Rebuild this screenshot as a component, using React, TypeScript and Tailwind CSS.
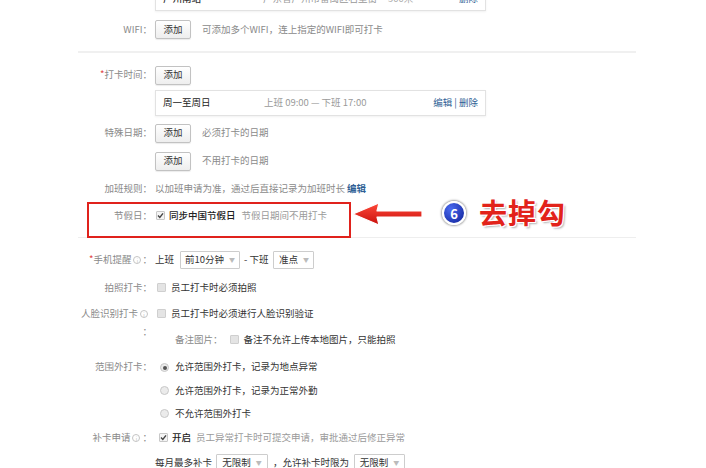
import React from "react";

const Btn = () => (
  <span className="inline-flex h-[19px] w-[36px] items-center justify-center rounded-[2px] border border-[#c2c2c2] bg-linear-to-b from-white to-[#eeeeee] text-[#333] shadow-[0_1px_1px_rgba(0,0,0,0.08)]">
    添加
  </span>
);

const Check = ({ checked = false }: { checked?: boolean }) =>
  checked ? (
    <span className="inline-flex h-[9px] w-[9px] items-center justify-center rounded-[1px] border border-[#c8c8c8] bg-[#f4f4f4]">
      <svg width="7" height="7" viewBox="0 0 7 7">
        <path d="M1 3.6 L2.8 5.4 L6 1.4" stroke="#444" strokeWidth="1.4" fill="none" />
      </svg>
    </span>
  ) : (
    <span className="inline-block h-[9px] w-[9px] rounded-[1px] border border-[#cfcfcf] bg-[#e4e4e4]" />
  );

const Radio = ({ on = false }: { on?: boolean }) => (
  <span className="inline-flex h-[9px] w-[9px] items-center justify-center rounded-full border border-[#c8c8c8] bg-[#ebebeb]">
    {on && <span className="h-[4px] w-[4px] rounded-full bg-[#555]" />}
  </span>
);

const Info = () => (
  <span className="ml-[2px] inline-flex h-[8px] w-[8px] items-center justify-center rounded-full border border-[#c4c4c4] text-[5px] leading-none text-[#bbb]">
    i
  </span>
);

const Sel = ({ text, w }: { text: string; w: string }) => (
  <span className={`inline-flex h-[18px] items-center justify-center gap-[5px] rounded-[1px] border border-[#cdcdcd] bg-white text-[#333] ${w}`}>
    <span>{text}</span>
    <span className="text-[6px] text-[#bbb]">▼</span>
  </span>
);

const Row = ({
  label,
  children,
  className = "",
}: {
  label?: React.ReactNode;
  children?: React.ReactNode;
  className?: string;
}) => (
  <div className={`flex h-[18px] items-center ${className}`}>
    <div className="flex w-[152px] shrink-0 items-center justify-end whitespace-nowrap text-[#8a8a8a]">
      {label}
    </div>
    <div className="ml-[3px] flex items-center whitespace-nowrap">{children}</div>
  </div>
);

export default function App() {
  return (
    <div className="relative h-[468px] w-[706px] overflow-hidden bg-white font-['Noto_Sans_CJK_SC','Noto_Sans',sans-serif] text-[9.5px] leading-none text-[#444]">
      <div className="-mt-[14px] flex flex-col">
        {/* top location box */}
        <div className="ml-[155px] flex h-[25px] w-[331px] items-center border border-[#e2e2e2] px-[7px] shadow-[0_1px_2px_rgba(0,0,0,0.06)]">
          <span className="w-[100px] font-medium text-[#333]">广州南站</span>
          <span className="w-[125px] text-[#999]">广东省广州市番禺区石壁街</span>
          <span className="text-[#aaa]">500米</span>
          <span className="ml-auto text-[#2f5f95]">删除</span>
        </div>

        <Row label="WIFI：" className="mt-[9px] h-[19px]">
          <Btn />
          <span className="ml-[11px] text-[#8a8a8a]">可添加多个WIFI，连上指定的WIFI即可打卡</span>
        </Row>

        <div className="ml-[78px] mt-[12px] h-[2px] w-[558px] bg-[#f0f0f0]" />

        <Row
          className="mt-[13px]"
          label={
            <>
              <span className="text-[#e04040]">*</span>打卡时间：
            </>
          }
        >
          <Btn />
        </Row>

        <div className="ml-[155px] mt-[6px] flex h-[26px] w-[331px] items-center border border-[#e2e2e2] px-[7px] shadow-[0_1px_2px_rgba(0,0,0,0.06)]">
          <span className="w-[101px] text-[#1a1a1a]">周一至周日</span>
          <span className="text-[#9a9a9a]">上班 09:00 — 下班 17:00</span>
          <span className="ml-auto text-[#2f5f95]">编辑 | 删除</span>
        </div>

        <Row label="特殊日期：" className="mt-[8px]">
          <Btn />
          <span className="ml-[11px] text-[#8a8a8a]">必须打卡的日期</span>
        </Row>
        <Row className="mt-[10px]">
          <Btn />
          <span className="ml-[11px] text-[#8a8a8a]">不用打卡的日期</span>
        </Row>

        <Row label="加班规则：" className="mt-[10px]">
          <span className="text-[#8a8a8a]">以加班申请为准，通过后直接记录为加班时长</span>
          <span className="ml-[2px] font-bold text-[#2f5f95]">编辑</span>
        </Row>

        <Row label="节假日：" className="mt-[9px]">
          <span className="ml-[1px]">
            <Check checked />
          </span>
          <span className="ml-[4px] font-medium text-[#222]">同步中国节假日</span>
          <span className="ml-[6px] text-[#9a9a9a]">节假日期间不用打卡</span>
        </Row>

        <div className="ml-[78px] mt-[12px] h-[1px] w-[558px] bg-[#eeeeee]" />

        <Row
          className="mt-[13px]"
          label={
            <>
              <span className="text-[#e04040]">*</span>手机提醒
              <Info />
              <span className="ml-[1px]">：</span>
            </>
          }
        >
          <span className="text-[#333]">上班</span>
          <span className="ml-[6px]">
            <Sel text="前10分钟" w="w-[60px]" />
          </span>
          <span className="ml-[4px] text-[#333]">- 下班</span>
          <span className="ml-[5px]">
            <Sel text="准点" w="w-[41px]" />
          </span>
        </Row>

        <Row label="拍照打卡：" className="mt-[10px]">
          <span className="ml-[2px]">
            <Check />
          </span>
          <span className="ml-[5px] text-[#333]">员工打卡时必须拍照</span>
        </Row>

        <Row
          className="mt-[8px]"
          label={
            <>
              人脸识别打卡
              <Info />
              <span className="w-[4px]" />
            </>
          }
        >
          <span className="ml-[2px]">
            <Check />
          </span>
          <span className="ml-[5px] text-[#333]">员工打卡时必须进行人脸识别验证</span>
        </Row>
        <div className="flex">
          <div className="w-[152px] shrink-0 pt-[4px] text-right text-[#8a8a8a]">：</div>
          <div className="ml-[23px] mt-[8px] flex h-[18px] items-center whitespace-nowrap">
            <span className="text-[#8a8a8a]">备注图片：</span>
            <span className="ml-[7px]">
              <Check />
            </span>
            <span className="ml-[5px] text-[#333]">备注不允许上传本地图片，只能拍照</span>
          </div>
        </div>

        <Row label="范围外打卡：" className="mt-[9px]">
          <span className="ml-[5px]">
            <Radio on />
          </span>
          <span className="ml-[6px] text-[#333]">允许范围外打卡，记录为地点异常</span>
        </Row>
        <Row className="mt-[6px]">
          <span className="ml-[5px]">
            <Radio />
          </span>
          <span className="ml-[6px] text-[#333]">允许范围外打卡，记录为正常外勤</span>
        </Row>
        <Row className="mt-[5px]">
          <span className="ml-[5px]">
            <Radio />
          </span>
          <span className="ml-[6px] text-[#333]">不允许范围外打卡</span>
        </Row>

        <Row
          className="mt-[6px]"
          label={
            <>
              补卡申请
              <Info />
              <span className="ml-[2px]">：</span>
            </>
          }
        >
          <span className="ml-[4px]">
            <Check checked />
          </span>
          <span className="ml-[4px] font-medium text-[#222]">开启</span>
          <span className="ml-[5px] text-[#9a9a9a]">员工异常打卡时可提交申请，审批通过后修正异常</span>
        </Row>

        <Row className="mt-[7px]">
          <span className="text-[#333]">每月最多补卡</span>
          <span className="ml-[4px]">
            <Sel text="无限制" w="w-[52px]" />
          </span>
          <span className="ml-[5px] text-[#333]">，允许补卡时限为</span>
          <span className="ml-[5px]">
            <Sel text="无限制" w="w-[51px]" />
          </span>
        </Row>
      </div>

      {/* annotation overlay */}
      <div className="absolute left-[87px] top-[202px] h-[36px] w-[264px] border-[2px] border-[#e0221c]" />
      <svg className="absolute left-[351px] top-[200px]" width="74" height="28" viewBox="0 0 74 28">
        <defs>
          <linearGradient id="ag" x1="0" y1="0" x2="0" y2="1">
            <stop offset="0" stopColor="#ff4a3a" />
            <stop offset="1" stopColor="#c8100c" />
          </linearGradient>
        </defs>
        <path
          d="M2 14 L28 3 L26 11 L71 11 L71 17 L26 17 L28 25 Z"
          fill="url(#ag)"
          stroke="#fff"
          strokeWidth="1.2"
          strokeLinejoin="round"
        />
      </svg>
      <div className="absolute left-[442px] top-[201px] flex h-[24px] w-[24px] items-center justify-center rounded-full border-[2px] border-white bg-radial-[at_35%_30%] from-[#4b6bf0] to-[#0d1f96] text-[13px] font-bold text-white shadow-[0_0_2px_1px_rgba(0,0,0,0.35)]">
        6
      </div>
      <div className="absolute left-[479px] top-[195px] text-[28px] font-bold leading-[34px] tracking-[1px] text-[#e2231a] [text-shadow:1px_1px_0_#fff,-1px_-1px_0_#fff,1px_-1px_0_#fff,-1px_1px_0_#fff,2px_2px_2px_rgba(0,0,0,0.3)]">
        去掉勾
      </div>
    </div>
  );
}
